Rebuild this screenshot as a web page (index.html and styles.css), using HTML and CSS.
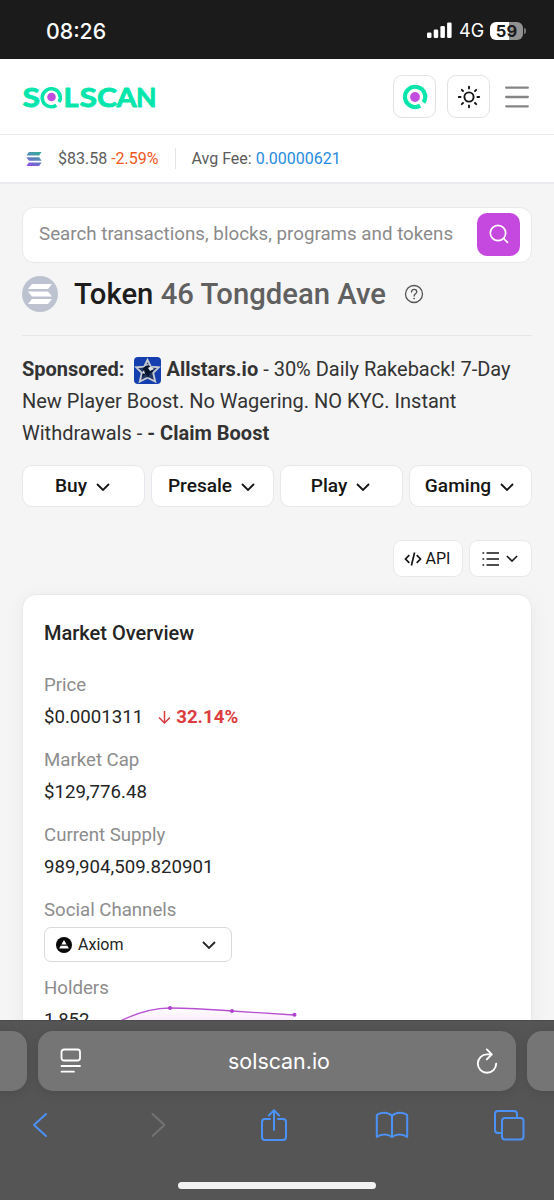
FILE: index.html
```html
<!DOCTYPE html>
<html lang="en">
<head>
<meta charset="utf-8">
<title>Token 46 Tongdean Ave | Solscan</title>
<link rel="stylesheet" href="styles.css">
</head>
<body>
<svg class="defs" width="0" height="0" aria-hidden="true">
  <symbol id="chevron" viewBox="0 0 14 8"><path d="M1 1l6 6 6-6" fill="none" stroke="currentColor" stroke-width="1.8"/></symbol>
  <symbol id="sol" viewBox="0 0 24 22"><path d="M4 0h20l-4 5.600H0zM0 8.200h20l4 5.600H4zM4 16.400h20L20 22H0z"/></symbol>
</svg>
<div class="phone">
  <div class="status">
    <span class="time">08:26</span>
    <div class="status-icons">
      <svg class="signal" width="25" height="17" viewBox="0 0 25 17" fill="#fff"><rect x="0" y="10.500" width="4.500" height="5.500" rx="1.300"/><rect x="6.700" y="7.500" width="4.500" height="8.500" rx="1.300"/><rect x="13.400" y="4" width="4.500" height="12" rx="1.300"/><rect x="20.100" y="0.500" width="4.500" height="15.500" rx="1.300"/></svg>
      <span class="network">4G</span>
      <div class="battery"><span>59</span></div>
      <i class="battery-tip"></i>
    </div>
  </div>

  <div class="page">
    <header class="header">
      <svg class="logo" width="146" height="48" viewBox="-4 -12 146 48">
        <g class="logo-text">
          <text x="0.500" y="22" textLength="17.500" lengthAdjust="spacingAndGlyphs">S</text>
          <text x="41.500" y="22" textLength="15" lengthAdjust="spacingAndGlyphs">L</text>
          <text x="57.500" y="22" textLength="17.500" lengthAdjust="spacingAndGlyphs">S</text>
          <text x="75" y="22" textLength="20" lengthAdjust="spacingAndGlyphs">C</text>
          <text x="94.500" y="22" textLength="20" lengthAdjust="spacingAndGlyphs">A</text>
          <text x="114" y="22" textLength="20.500" lengthAdjust="spacingAndGlyphs">N</text>
        </g>
        <path d="M34.300 20.200A9 9 0 1 1 37.200 17" fill="none" stroke="#06e6ac" stroke-width="3.600"/>
        <circle cx="29.500" cy="12" r="4.300" fill="#c24be0"/>
      </svg>
      <div class="header-actions">
        <button class="icon-btn"><svg width="26" height="26" viewBox="0 0 26 26"><path d="M18.200 21.600A10.100 10.100 0 1 1 21.500 18.500" fill="none" stroke="#06e6ac" stroke-width="4.200"/><circle cx="13" cy="13" r="4.900" fill="#c24be0"/></svg></button>
        <button class="icon-btn"><svg width="24" height="24" viewBox="0 0 24 24" fill="none" stroke="#151515" stroke-width="1.900" stroke-linecap="round"><circle cx="12" cy="12" r="4.600"/><path d="M12 1.800v1.800M12 20.400v1.800M1.800 12h1.800M20.400 12h1.800M4.800 4.800l1.200 1.200M18 18l1.200 1.200M4.800 19.200L6 18M18 6l1.200-1.200"/></svg></button>
        <svg class="menu" width="24" height="22" viewBox="0 0 24 22" stroke="#858585" stroke-width="2.300" stroke-linecap="round"><path d="M1.200 1.700h21.600M1.200 11h21.600M1.200 20.300h21.600"/></svg>
      </div>
    </header>

    <div class="ticker">
      <svg class="sol-mini" width="16" height="14" viewBox="0 0 24 22"><defs><linearGradient id="solg" gradientUnits="userSpaceOnUse" x1="4" y1="22" x2="14" y2="0"><stop offset="0" stop-color="#8a50e4"/><stop offset="1" stop-color="#39a99e"/></linearGradient></defs><path fill="url(#solg)" d="M4 0h20l-4 5.600H0zM0 8.200h20l4 5.600H4zM4 16.400h20L20 22H0z"/></svg>
      <span class="sol-price">$83.58 <b>-2.59%</b></span>
      <span class="fee">Avg Fee: <b>0.00000621</b></span>
    </div>

    <main class="main">
      <div class="search">
        <span>Search transactions, blocks, programs and tokens</span>
        <button class="search-btn"><svg width="20" height="20" viewBox="0 0 20 20" fill="none" stroke="#fff" stroke-width="1.700" stroke-linecap="round"><circle cx="9" cy="9" r="7.700"/><path d="M14.700 14.700l3.800 3.600"/></svg></button>
      </div>

      <div class="title">
        <span class="token-icon"><svg width="24" height="20" viewBox="0 0 24 22" preserveAspectRatio="none" fill="#fff"><use href="#sol"/></svg></span>
        <h1>Token <span>46 Tongdean Ave</span></h1>
        <svg class="help" width="20" height="20" viewBox="0 0 20 20" fill="none" stroke="#555" stroke-width="1.300"><circle cx="10" cy="10" r="8.500"/><path d="M7.500 8c0-3.600 5.300-3.300 5.300-.3 0 2-2.700 2-2.700 4.300" stroke-linecap="round"/><circle cx="10.100" cy="14.500" r=".5" fill="#555" stroke-width=".8"/></svg>
      </div>

      <p class="sponsored"><strong>Sponsored: </strong><svg class="ad-logo" width="27" height="27" viewBox="0 0 27 27"><rect width="27" height="27" rx="4" fill="#153fae"/><path d="M13.500 3l3.300 6.700 8 .6-5.600 5.600 2 8.600-7.700-3.800-7.700 3.800 2-8.600-5.600-5.600 8-.6z" fill="#233765" stroke="#c6cbd3" stroke-width="1.900"/><path d="M9 11l4-3 5 2 1 5-3 1-2 5-2-4-4 3 1-4z" fill="#07152d"/><path d="M14 11l3-2 3 3-4 2zM8 16l2-3 1 4zM11 9l2-2 2 1z" fill="#dce0e5"/></svg><strong>Allstars.io</strong> - 30% Daily Rakeback! 7-Day<br>New Player Boost. No Wagering. NO KYC. Instant<br>Withdrawals - <strong>- Claim Boost</strong></p>

      <nav class="promo">
        <button>Buy <svg class="chev"><use href="#chevron"/></svg></button>
        <button>Presale <svg class="chev"><use href="#chevron"/></svg></button>
        <button>Play <svg class="chev"><use href="#chevron"/></svg></button>
        <button>Gaming <svg class="chev"><use href="#chevron"/></svg></button>
      </nav>

      <div class="tools">
        <button class="api"><svg width="18" height="14" viewBox="0 0 18 14" fill="none" stroke="#151515" stroke-width="1.700"><path d="M5.300 3.200L1.500 7l3.800 3.800M12.700 3.200L16.500 7l-3.800 3.800M10.600.5L7.400 13.500"/></svg>API</button>
        <button class="list"><svg width="17" height="14" viewBox="0 0 17 14" stroke="#151515" stroke-width="1.500"><path d="M4.500 1H17M4.500 7H17M4.500 13H17M.5 1H2.200M.5 7H2.200M.5 13H2.200"/></svg><svg class="chev small"><use href="#chevron"/></svg></button>
      </div>

      <section class="card">
        <h2>Market Overview</h2>
        <dl>
          <dt>Price</dt>
          <dd>$0.0001311<span class="change"><svg width="13" height="14" viewBox="0 0 13 14" fill="none" stroke="currentColor" stroke-width="1.500"><path d="M6.500 1v12M1 7.500L6.500 13 12 7.500"/></svg>32.14%</span></dd>
          <dt>Market Cap</dt>
          <dd>$129,776.48</dd>
          <dt>Current Supply</dt>
          <dd>989,904,509.820901</dd>
          <dt>Social Channels</dt>
          <dd class="select"><svg width="16" height="16" viewBox="0 0 16 16"><circle cx="8" cy="8" r="8" fill="#080808"/><path d="M8 3L10.600 7.500H5.400zM4.700 8.700h6.600l1.600 2.800H3.100z" fill="#fff"/></svg><span>Axiom</span><svg class="chev"><use href="#chevron"/></svg></dd>
          <dt>Holders</dt>
          <dd class="holders"><span>1,852</span><svg width="200" height="40" viewBox="0 0 200 40"><defs><linearGradient id="area" x1="0" y1="0" x2="0" y2="1"><stop stop-color="#fff"/><stop offset="1" stop-color="#f0c6f6"/></linearGradient></defs><path d="M10 19C30 9 48 4 66 4c22 0 42 1.500 62 3l62 4v29H10z" fill="url(#area)"/><path d="M0 26C26 10 48 4 66 4c22 0 42 1.500 62 3l62 4" fill="none" stroke="#b950d3" stroke-width="1.300"/><g fill="#b03fcf"><circle cx="66" cy="4" r="2"/><circle cx="128" cy="7" r="2"/><circle cx="190.500" cy="10.700" r="2"/></g></svg></dd>
        </dl>
      </section>
    </main>
  </div>

  <footer class="browser">
    <div class="tabs">
      <div class="tab side"></div>
      <div class="tab current">
        <svg width="22" height="26" viewBox="0 0 22 26" fill="none" stroke="#fff" stroke-width="1.800" stroke-linecap="round"><rect x="1.500" y="1.500" width="18.500" height="11" rx="2.500"/><path d="M1.500 18H20M1.500 23.700H14"/></svg>
        <span>solscan.io</span>
        <svg width="22" height="26" viewBox="0 0 22 26" fill="none" stroke="#fff" stroke-width="1.900" stroke-linecap="round" stroke-linejoin="round"><path d="M15.800 6.400H11A9.200 9.200 0 1 0 20.200 15.600M10.800 1.400l5 5-5 5"/></svg>
      </div>
      <div class="tab side"></div>
    </div>
    <div class="toolbar">
      <svg width="18" height="26" viewBox="0 0 18 26"><path d="M15 2L3 13l12 11"/></svg>
      <svg class="off" width="16" height="26" viewBox="0 0 16 26"><path d="M3.500 2l12 11-12 11"/></svg>
      <svg width="28" height="34" viewBox="0 0 28 34"><path d="M10 11H5a3 3 0 0 0-3 3v15a3 3 0 0 0 3 3h18a3 3 0 0 0 3-3V14a3 3 0 0 0-3-3h-5M14 22V2.500M8.800 7.500L14 2.300l5.200 5.200"/></svg>
      <svg width="34" height="28" viewBox="0 0 34 28"><path d="M17 5C13 .5 5 1 1.800 4v22C6 22.500 13 22.500 17 26c4-3.500 11-3.500 15.200 0V4C29 1 21 .5 17 5zM17 5v21"/></svg>
      <svg width="32" height="32" viewBox="0 0 32 32"><path d="M8.500 24H5a3 3 0 0 1-3-3V5a3 3 0 0 1 3-3h16a3 3 0 0 1 3 3v3.500"/><rect x="9" y="9" width="21.500" height="21.500" rx="3"/></svg>
    </div>
    <div class="home-bar"></div>
  </footer>
</div>
</body>
</html>
```
FILE: styles.css
```css
* { box-sizing: border-box; }
body, h1, h2, p, dl, dd { margin: 0; }
body { font-family: Roboto, "Liberation Sans", sans-serif; color: #2b2b2b; }
button { font: inherit; color: #151515; padding: 0; border: 1px solid #e8e8ea; background: #fff; }
svg { display: block; flex: none; }
.defs { position: absolute; }
.phone { width: 554px; height: 1200px; overflow: hidden; display: flex; flex-direction: column; background: #f5f5f5; }

.status { height: 59px; flex: none; background: #1b1b1b; color: #fff; display: flex; justify-content: space-between; align-items: flex-start; padding: 18px 28px 0 46px; font-family: Inter, sans-serif; }
.time { font-size: 21.300px; line-height: 26px; font-weight: 500; }
.status-icons { display: flex; align-items: center; height: 25px; }
.network { font-size: 18px; margin-left: 7px; width: 31px; }
.battery { width: 33px; height: 18px; border-radius: 6px; background: linear-gradient(90deg, #fff 59%, #929292 59%); color: #1b1b1b; font-size: 16.500px; line-height: 18px; font-weight: 700; text-align: center; }
.battery-tip { width: 2px; height: 6px; margin-left: 1px; border-radius: 0 3px 3px 0; background: #777; }

.page { height: 961px; overflow: hidden; flex: none; }
.header { height: 76px; background: #fff; border-bottom: 1px solid #e9e9ee; display: flex; align-items: center; justify-content: space-between; padding: 0 25px 0 18px; }
.logo-text { font: 700 27px Lato, sans-serif; fill: #06e6ac; stroke: #06e6ac; stroke-width: .9; stroke-linejoin: round; }
.header-actions { display: flex; align-items: center; }
.icon-btn { width: 43px; height: 43px; border: 1px solid #e2e2e2; border-radius: 9px; display: grid; place-items: center; margin-right: 11px; }
.menu { margin-left: 4px; }
.ticker { height: 49px; background: #fff; border-bottom: 2px solid #e9eaee; display: flex; align-items: center; padding-left: 26px; font-size: 16px; color: #5c5c5c; }
.ticker b { font-weight: 400; }
.sol-price { margin-left: 16px; padding-right: 16px; line-height: 21px; border-right: 1px solid #e5e5e8; }
.sol-price b { color: #ed5723; }
.fee { margin-left: 16px; }
.fee b { color: #268bdf; }

.main { padding: 23px 22px 0; font-size: 18.650px; }
.search { height: 56px; background: #fff; border: 1px solid #e9e9ec; border-radius: 12px; display: flex; align-items: center; justify-content: space-between; padding: 0 11px 2px 16px; color: #8b8b8b; font-size: 18.750px; }
.search-btn { width: 43px; height: 43px; border: 0; border-radius: 10px; background: #c549df; display: grid; place-items: center; }
.title { height: 73px; display: flex; align-items: center; padding-bottom: 10px; border-bottom: 1px solid #e6e6e8; }
.token-icon { width: 36px; height: 36px; border-radius: 50%; background: #bcc2d0; display: grid; place-items: center; }
h1 { margin-left: 16px; font-size: 29.250px; line-height: 40px; font-weight: 500; color: #1d1d1d; }
h1 span { color: #606060; }
.help { margin-left: 18px; }
.sponsored { height: 113px; padding-top: 17px; font-size: 20px; line-height: 32px; white-space: nowrap; color: #333; }
.sponsored strong { font-weight: 700; }
.ad-logo { display: inline-block; vertical-align: middle; margin: -4px 5px -3px 5px; }
.promo { display: grid; grid-template-columns: repeat(4, 1fr); gap: 6px; margin-top: 16px; }
.promo button { height: 42px; border-radius: 10px; border-color: #e8e8ec; font-size: 19.100px; font-weight: 500; display: flex; align-items: center; justify-content: center; gap: 9px; padding: 0 2px 1px 0; }
.chev { width: 14px; height: 8px; }
.promo .chev { margin-top: 2px; }
.tools { display: flex; justify-content: flex-end; gap: 6px; margin-top: 33px; }
.tools button { height: 37px; border-radius: 9px; display: flex; align-items: center; justify-content: center; padding-right: 2px; }
.api { width: 70px; gap: 4px; font-size: 16px; }
.list { width: 63px; gap: 7px; }
.chev.small { width: 12px; height: 7px; }

.card { margin-top: 17px; height: 600px; background: #fff; border: 1px solid #e9e9ed; border-radius: 14px; box-shadow: 0 4px 20px rgba(30, 30, 50, .05); padding: 21px; }
h2 { font-size: 20px; line-height: 34px; font-weight: 500; color: #252525; }
dl { padding-top: 8px; line-height: 32px; }
dt { margin-top: 11px; color: #8d8d8d; }
dd { color: #252525; display: flex; align-items: center; }
.change { display: flex; align-items: center; gap: 5px; margin-left: 15px; color: #dc3c40; font-weight: 700; }
dd.select { width: 188px; height: 35px; margin: 1px 0 -1px; border: 1px solid #d9d9d9; border-radius: 7px; font-size: 16px; padding: 0 15px 0 11px; }
.select span { margin: 0 auto 0 6px; }
.holders span { width: 60px; flex: none; }
dd.holders { align-items: flex-start; }

.browser { height: 180px; background: #555; border-top: 1px solid #4b4b4b; color: #fff; }
.tabs { display: flex; justify-content: center; gap: 11px; padding-top: 10px; }
.tab { height: 60px; border-radius: 15px; background: #757575; box-shadow: 0 2px 12px rgba(0, 0, 0, .12); flex: none; }
.side { width: 70px; }
.current { width: 478px; display: flex; align-items: center; justify-content: space-between; padding: 0 18px 0 22px; font: 21.400px Inter, sans-serif; }
.toolbar { display: grid; grid-template-columns: repeat(5, 117.400px); place-items: center; height: 34px; margin: 17px 0 0 -19px; fill: none; stroke: #4c91f5; stroke-width: 2; stroke-linecap: round; stroke-linejoin: round; }
.toolbar .off { stroke: #737373; }
.home-bar { width: 198px; height: 7px; border-radius: 4px; background: #f2f2f2; margin: 40px auto 0; }
```
